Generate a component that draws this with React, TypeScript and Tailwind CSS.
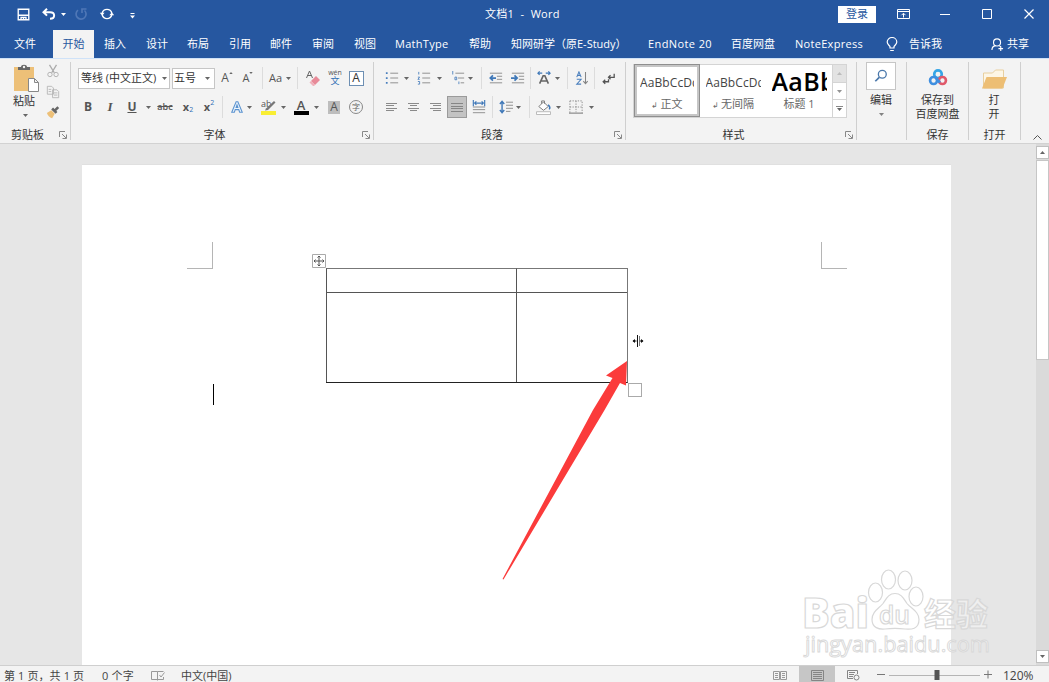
import type { ReactNode } from "react";
import { twMerge } from "tailwind-merge";

const TABS = [
  { label: "插入", width: "w-[42px]" },
  { label: "设计", width: "w-[41px]" },
  { label: "布局", width: "w-[42px]" },
  { label: "引用", width: "w-[41px]" },
  { label: "邮件", width: "w-[42px]" },
  { label: "审阅", width: "w-[42px]" },
  { label: "视图", width: "w-[41px]" },
  { label: "MathType", width: "w-[74px] tracking-[0.3px]" },
  { label: "帮助", width: "w-[42px]" },
  { label: "知网研学（原E-Study）", width: "w-[137px]" },
  { label: "EndNote 20", width: "w-[83px] tracking-[0.4px]" },
  { label: "百度网盘", width: "w-[64px]" },
  { label: "NoteExpress", width: "w-[91px] tracking-[0.3px]" },
];

function Caret({ className }: { className?: string }) {
  return (
    <svg viewBox="0 0 5 3" className={twMerge("h-[3px] w-[5px] shrink-0", className)}>
      <path d="M0 0h5L2.5 3z" fill="#666" />
    </svg>
  );
}

function Cell({ className, children }: { className?: string; children?: ReactNode }) {
  return (
    <div className={twMerge("flex h-[22px] shrink-0 items-center justify-center", className)}>
      {children}
    </div>
  );
}

function Sep({ className }: { className?: string }) {
  return <div className={twMerge("h-[22px] w-px shrink-0 bg-[#dcdcdc]", className)} />;
}

function Icon({ children, className }: { children: ReactNode; className?: string }) {
  return (
    <svg
      viewBox="0 0 16 16"
      fill="none"
      className={twMerge("size-[14px] shrink-0 stroke-[#858585]", className)}
    >
      {children}
    </svg>
  );
}

function Launcher() {
  return (
    <svg viewBox="0 0 8 8" fill="none" stroke="#888" className="size-2 shrink-0">
      <path d="M.5 6V.5H6M3 3l4 4M7.5 3.5v4h-4" />
    </svg>
  );
}

function Group({
  className,
  label,
  launcher,
  children,
}: {
  className: string;
  label?: string;
  launcher?: boolean;
  children: ReactNode;
}) {
  return (
    <section className={twMerge("flex shrink-0 flex-col", className)}>
      <div className="h-[67px]">{children}</div>
      <div className="flex h-[17px] items-center pr-[3px] pt-px">
        <span className={launcher ? "flex-1 pr-1 text-center" : "flex-1 pl-[3px] text-center"}>
          {label}
        </span>
        {launcher && <Launcher />}
      </div>
    </section>
  );
}

function GroupLine() {
  return <div className="mt-[3px] h-[78px] w-px shrink-0 bg-[#cfcfcf]" />;
}

function TitleBar() {
  return (
    <div className="flex h-[30px] items-center pb-[2px] text-white">
      <div className="flex w-[485px] items-center">
        <Icon className="ml-[17px] size-[13px] stroke-white">
          <path d="M1.500 1.500h13v13h-13zM1.500 9h13M5 14.500v-3h6v3M8 12v2" strokeWidth="1.700" />
        </Icon>
        <svg viewBox="0 0 14 12" fill="none" stroke="#fff" strokeWidth="2" className="ml-[12px] h-3 w-[14px]">
          <path d="M5 .8 1.500 4.200 5 7.600M1.500 4.200h6.500c5.500 0 5.500 6.500 0 6.500" />
        </svg>
        <svg viewBox="0 0 5 3" className="ml-[5px] h-[3px] w-[5px]">
          <path d="M0 0h5L2.500 3z" fill="#fff" />
        </svg>
        <svg viewBox="0 0 14 14" fill="none" stroke="#4f77b6" strokeWidth="1.700" className="ml-[8px] size-[14px]">
          <path d="M4 3.200A5 5 0 1 0 10.500 3.500M8 6V2h4.500" />
        </svg>
        <svg viewBox="0 0 16 14" fill="none" stroke="#fff" strokeWidth="1.400" className="ml-[11px] h-[14px] w-4">
          <path d="M3.200 6a5 5 0 0 1 9.600 0M12.800 8a5 5 0 0 1-9.600 0" />
          <path d="M.8 5.800h4.800L3.200 8.800zM10.400 8.200h4.800l-2.400-3z" fill="#fff" stroke="none" />
        </svg>
        <svg viewBox="0 0 5 6" className="ml-[15px] mt-[3px] h-[6px] w-[5px]">
          <path d="M.5 0h4v1h-4zM0 2.500h5L2.500 5.500z" fill="#fff" />
        </svg>
      </div>
      <span className="w-[353px] whitespace-pre text-[11px] tracking-[0.3px]">文档1  -  Word</span>
      <div className="flex h-[17px] w-[38px] items-center justify-center bg-white text-[11px] text-[#2757a0]">
        登录
      </div>
      <svg viewBox="0 0 13 10" fill="none" stroke="#fff" className="ml-[21px] h-[10px] w-[13px]">
        <path d="M.5.5h12v9H.5zM.5 2.500h12M6.500 8.500v-4M4.500 6.200l2-2 2 2" />
      </svg>
      <svg viewBox="0 0 10 10" stroke="#fff" className="ml-[30px] size-[10px]">
        <path d="M0 5.500h10" />
      </svg>
      <svg viewBox="0 0 10 10" fill="none" stroke="#fff" className="ml-[32px] size-[10px]">
        <path d="M.5.5h9v9h-9z" />
      </svg>
      <svg viewBox="0 0 10 10" stroke="#fff" strokeWidth="1.200" className="ml-[32px] size-[10px]">
        <path d="m.5.5 9 9m0-9-9 9" />
      </svg>
    </div>
  );
}

function TabBar() {
  return (
    <nav className="flex h-7 items-center whitespace-nowrap text-[11px] text-white">
      <span className="w-[53px] pl-[14px]">文件</span>
      <span className="mr-[10px] flex h-7 w-[41px] items-center justify-center bg-[#f3f3f3] text-[#2757a0]">
        开始
      </span>
      {TABS.map((tab) => (
        <span key={tab.label} className={twMerge("shrink-0", tab.width)}>
          {tab.label}
        </span>
      ))}
      <svg viewBox="0 0 12 15" fill="none" stroke="#fff" strokeWidth="1.200" className="h-[15px] w-3">
        <path d="M4 11V9.500C3 8 1.200 7.200 1.200 5a4.800 4.500 0 0 1 9.600 0c0 2.200-1.800 3-2.800 4.500V11zM4.200 13.500h3.600" />
      </svg>
      <span className="ml-[11px] w-[82px]">告诉我</span>
      <svg viewBox="0 0 14 14" fill="none" stroke="#fff" strokeWidth="1.200" className="size-[13px]">
        <circle cx="6.500" cy="4.800" r="3.800" />
        <path d="M1 13c0-3 2-4.500 4-4.800M9 8.500l1.500 1M10.500 9v5M8 11.500h5" />
      </svg>
      <span className="ml-[3px]">共享</span>
    </nav>
  );
}

function Clipboard() {
  return (
    <Group className="w-[70px]" label="剪贴板" launcher>
      <div className="flex pl-[12px] pt-[5px]">
        <div className="flex w-[28px] flex-col items-start">
          <svg viewBox="0 0 28 28" className="h-7 w-7">
            <path d="M2 3h20v24H2z" fill="#edc078" />
            <path d="M6 6V3h3c0-3 6-3 6 0h3v3z" fill="#666" />
            <circle cx="12" cy="3" r="1.200" fill="#f3f3f3" />
            <path d="M16.500 14.500h6l4 4v9h-10zM22.500 14.500v4h4" fill="#fff" stroke="#888" />
          </svg>
          <span className="mt-[1px] w-6 text-center text-[11px] leading-[15px]">粘贴</span>
          <Caret className="ml-[11px] mt-[6px]" />
        </div>
        <div className="ml-[5px] flex w-4 flex-col items-center">
          <Icon className="stroke-[#ababab]">
            <path d="m4 1 5.500 9M12 1 6.500 10" strokeWidth="1.500" />
            <circle cx="4.500" cy="12" r="2.500" />
            <circle cx="11.500" cy="12" r="2.500" />
          </Icon>
          <Icon className="mt-[7px] stroke-[#b3b3b3]">
            <path d="M1.500 1.500h5l2 2v7h-7zM7.500 5.500h5l2 2v7h-7zM3 5h3M3 7.500h3M9 9h4M9 11.500h4" />
          </Icon>
          <Icon className="mt-[6px]">
            <path d="m1 9 5-3 4 4-3 5c-3-1-5-3-6-6z" fill="#edc078" stroke="none" />
            <path d="m7 4 5 5M10 6.500l4-4" strokeWidth="3" stroke="#666" />
          </Icon>
        </div>
      </div>
    </Group>
  );
}

function FontGroup() {
  return (
    <Group className="w-[302px]" label="字体" launcher>
      <div className="flex h-[28px] items-center pl-[7px] pt-[10px]">
        <div className="mt-[1px] flex h-[21px] w-[92px] shrink-0 items-center justify-between border border-[#c6c6c6] bg-white px-[2px] text-[11px]">
          <span className="whitespace-nowrap">等线 (中文正文)</span>
          <Caret />
        </div>
        <div className="ml-[2px] mt-[1px] flex h-[21px] w-[43px] shrink-0 items-center justify-between border border-[#c6c6c6] bg-white pl-[1px] pr-1 text-[11px]">
          <span>五号</span>
          <Caret />
        </div>
        <Cell className="ml-[2px] w-5 text-[12px] text-[#555]">
          A<Caret className="-mt-[10px] h-[2px] w-1 rotate-180" />
        </Cell>
        <Cell className="ml-px w-5 text-[11px] text-[#555]">
          A<Caret className="-mt-[10px] h-[2px] w-1" />
        </Cell>
        <Sep className="ml-[4px]" />
        <Cell className="w-[34px] gap-1 text-[11px] text-[#555]">
          Aa <Caret />
        </Cell>
        <Sep />
        <Cell className="ml-1 w-[22px]">
          <Icon className="size-4">
            <path d="M1.500 8 4.500 1l3 7M2.500 5.500h4" stroke="#666" />
            <path d="m6 11 5-5 4 4-5 5z" fill="#e88a98" stroke="none" />
            <path d="m4.500 12.500 1.500-1.500 4 4-1 1H8z" fill="#f0b0ba" stroke="none" />
          </Icon>
        </Cell>
        <Cell className="w-[22px] flex-col text-[#555]">
          <span className="text-[7px] leading-[6px]">wén</span>
          <span className="text-[9px] leading-[10px] text-[#2f6fb5]">文</span>
        </Cell>
        <Cell className="w-[20px]">
          <span className="flex size-[15px] items-center justify-center border border-[#6d8fb3] bg-white text-[12px] leading-none text-[#333]">
            A
          </span>
        </Cell>
      </div>
      <div className="flex h-[29px] items-center pl-[6px] pt-[11px] text-[12px] text-[#555]">
        <Cell className="w-[22px] font-bold">B</Cell>
        <Cell className="w-[22px] font-['Liberation_Serif'] text-[13px] font-bold italic">I</Cell>
        <Cell className="w-[22px] font-bold underline">U</Cell>
        <Cell className="w-[10px]">
          <Caret />
        </Cell>
        <Cell className="w-6 text-[9px] font-semibold line-through">abc</Cell>
        <Cell className="w-[22px] text-[11px] font-bold">
          x<span className="mt-[7px] text-[7px] font-normal text-[#2f6fb5]">2</span>
        </Cell>
        <Cell className="w-5 text-[11px] font-bold">
          x<span className="-mt-[7px] text-[7px] font-normal text-[#2f6fb5]">2</span>
        </Cell>
        <Sep className="ml-[3px]" />
        <Cell className="ml-1 w-5">
          <Icon>
            <path d="M2 14 7 2h2l5 12h-3l-1-3H6l-1 3zM7 8.500h2L8 5.500z" stroke="#5b93cf" strokeWidth="1.200" fill="#eaf3fc" />
          </Icon>
        </Cell>
        <Caret />
        <Cell className="ml-[5px] w-6">
          <svg viewBox="0 0 16 15" className="h-[15px] w-4">
            <text x="0" y="7" fontSize="9" fill="#555">ab</text>
            <path d="M5 8.500 13 1l1.500 1.500L7 10l-3 .5z" fill="#777" />
            <path d="M0 11h15v4H0z" fill="#f9ee33" />
          </svg>
        </Cell>
        <Caret />
        <Cell className="ml-1 w-[22px] flex-col">
          <span className="text-[13px] font-semibold leading-[11px]">A</span>
          <span className="h-[4px] w-[15px] bg-black" />
        </Cell>
        <Caret className="ml-[2px]" />
        <Cell className="ml-1 w-[22px]">
          <span className="flex h-[13px] w-[12px] items-center justify-center bg-[#bdbdbd] leading-none">A</span>
        </Cell>
        <Cell className="w-[22px]">
          <span className="flex size-[14px] items-center justify-center rounded-full border border-[#888] text-[8px] leading-none text-[#666]">
            字
          </span>
        </Cell>
      </div>
    </Group>
  );
}

function ParagraphGroup() {
  return (
    <Group className="w-[251px]" label="段落" launcher>
      <div className="flex h-[28px] items-center pl-[6px] pt-[10px]">
        <Cell className="w-[24px]">
          <Icon>
            <path d="M6 2.500h9M6 8h9M6 13.500h9" />
            <path d="M1 2.500h2M1 8h2M1 13.500h2" stroke="#4a7fbd" strokeWidth="2" />
          </Icon>
        </Cell>
        <Caret />
        <Cell className="ml-[4px] w-[22px]">
          <Icon>
            <path d="M6 2.500h9M6 8h9M6 13.500h9" />
            <path d="M2 1v3M1 7h2l-2 2.500h2M1 12h2v3H1" stroke="#4a7fbd" />
          </Icon>
        </Cell>
        <Caret className="ml-[2px]" />
        <Cell className="ml-[6px] w-[20px]">
          <Icon>
            <path d="M5 2.500h10M8 8h7M11 13.500h4" />
            <path d="M2 0v4M4.500 7h2v3h-2zM9 12v3" stroke="#4a7fbd" />
          </Icon>
        </Cell>
        <Caret />
        <Sep className="ml-[8px]" />
        <Cell className="ml-[3px] w-[22px]">
          <Icon>
            <path d="M1 2.500h14M9 6h6M9 9.500h6M1 13.500h14" />
            <path d="M1.500 8H8M4.500 5 1.500 8l3 3" stroke="#3f78b8" strokeWidth="2" />
          </Icon>
        </Cell>
        <Cell className="w-[21px]">
          <Icon>
            <path d="M1 2.500h14M9 6h6M9 9.500h6M1 13.500h14" />
            <path d="M0 8h6.500M4 5l3 3-3 3" stroke="#3f78b8" strokeWidth="2" />
          </Icon>
        </Cell>
        <Sep className="ml-[2px]" />
        <Cell className="ml-[2px] w-[22px]">
          <Icon>
            <path d="m3 14.500 4-9h2l4 9M5 11.500h6" stroke="#666" strokeWidth="1.800" />
            <path d="M1 2.500h5M3 .5l-2 2 2 2M15 2.500h-5M13 .5l2 2-2 2" stroke="#3f78b8" strokeWidth="1.300" />
          </Icon>
        </Cell>
        <Caret />
        <Sep className="ml-[7px]" />
        <Cell className="ml-[3px] w-[21px]">
          <Icon>
            <path d="m2 7 2.500-6L7 7M3 5h3M2 9.500h5L2 15h5" stroke="#4a7fbd" strokeWidth="1.200" />
            <path d="M12 1v13M9.500 11.500l2.500 3 2.500-3" strokeWidth="1.200" />
          </Icon>
        </Cell>
        <Sep className="ml-[2px]" />
        <Cell className="ml-[2px] w-[22px]">
          <Icon className="size-[13px]">
            <path d="M15 2v4.500H8.500M10.500 4 8 6.500 10.500 9M8 9v3H1M4 9.500 1.500 12 4 14.500" stroke="#555" strokeWidth="1.600" />
          </Icon>
        </Cell>
      </div>
      <div className="flex h-[29px] items-center pl-[6px] pt-[11px]">
        <Cell className="w-[22px]">
          <svg viewBox="0 0 11 8" stroke="#8a8a8a" className="h-2 w-[11px]">
            <path d="M0 .5h11M0 2.500h8M0 5.500h11M0 7.500h8" />
          </svg>
        </Cell>
        <Cell className="w-[22px]">
          <svg viewBox="0 0 11 8" stroke="#8a8a8a" className="h-2 w-[11px]">
            <path d="M0 .5h11M2 2.500h7M0 5.500h11M2 7.500h7" />
          </svg>
        </Cell>
        <Cell className="w-[22px]">
          <svg viewBox="0 0 11 8" stroke="#8a8a8a" className="h-2 w-[11px]">
            <path d="M0 .5h11M3 2.500h8M0 5.500h11M3 7.500h8" />
          </svg>
        </Cell>
        <Cell className="ml-px w-[20px] border border-[#9a9a9a] bg-[#c3c3c3]">
          <svg viewBox="0 0 12 9" stroke="#858585" className="h-[9px] w-3">
            <path d="M0 .5h12M0 3.500h12M0 5.500h12M0 8.500h12" />
          </svg>
        </Cell>
        <Cell className="ml-px w-[22px]">
          <Icon>
            <path d="M1 8h14M1 11h14M1 14.500h14" />
            <path d="M1.500 0v7M14.500 0v7M3 3.500h10M5 1.500l-2 2 2 2M11 1.500l2 2-2 2" stroke="#3f78b8" strokeWidth="1.300" />
          </Icon>
        </Cell>
        <Sep className="ml-[2px]" />
        <Cell className="ml-[2px] w-[21px]">
          <Icon>
            <path d="M8 2.500h8M8 6h8M8 9.500h8M8 13h5" />
            <path d="M3.500 1v14M1 4.500l2.500-3 2.500 3M1 11.500l2.500 3 2.500-3" stroke="#3f78b8" strokeWidth="1.600" />
          </Icon>
        </Cell>
        <Caret />
        <Sep className="ml-[8px]" />
        <Cell className="ml-[2px] w-[22px]">
          <Icon className="size-[15px]">
            <path d="m3 7 5-5 5 5-5 4zM6 4V1h3v3" stroke="#777" fill="#fff" />
            <path d="M13 5c2 2 2 4 1 5" stroke="#3f78b8" strokeWidth="1.500" />
            <path d="M.5 12.500h15v3H.5z" stroke="#b5b5b5" fill="#fff" />
          </Icon>
        </Cell>
        <Caret className="ml-[2px]" />
        <Cell className="ml-[4px] w-[22px]">
          <Icon>
            <path d="M1 1h14v13.500M1 1v13.500M8 1v13M1 8h14" strokeDasharray="1.500 1.500" />
            <path d="M0 15h16" strokeWidth="1.300" />
          </Icon>
        </Cell>
        <Caret className="ml-[2px]" />
      </div>
    </Group>
  );
}

function StyleGroup() {
  return (
    <Group className="w-[230px]" label="样式" launcher>
      <div className="pl-[7px] pt-[5px]">
        <div className="flex h-[54px] w-[214px] border border-[#d4d4d4] bg-white text-[#666]">
          <div className="-mt-px flex h-[53px] w-[66px] shrink-0 flex-col border border-[#8f8f8f] bg-[#c6c6c6] p-[2px]">
            <div className="flex h-full w-full flex-col items-center bg-white pt-[7px]">
              <span className="w-[54px] overflow-hidden whitespace-nowrap text-[12px] leading-[18px] tracking-[0.1px] text-[#444]">AaBbCcDd</span>
              <span className="mt-[4px] text-[11px] leading-[15px]">
                <span className="text-[8px]">↲ </span>正文
              </span>
            </div>
          </div>
          <div className="flex w-[66px] shrink-0 flex-col items-center pt-[9px]">
            <span className="w-[55px] overflow-hidden whitespace-nowrap text-[12px] leading-[18px] tracking-[0.1px] text-[#444]">AaBbCcDd</span>
            <span className="mt-[4px] text-[11px] leading-[15px]">
              <span className="text-[8px]">↲ </span>无间隔
            </span>
          </div>
          <div className="flex w-[66px] shrink-0 flex-col items-center pt-[2px]">
            <span className="w-[55px] overflow-hidden whitespace-nowrap text-[25px] font-semibold leading-[29px] tracking-[0.3px] text-black">AaBb</span>
            <span className="text-[11px] leading-[15px]">标题 1</span>
          </div>
          <div className="flex w-[14px] shrink-0 flex-col border-l border-[#d4d4d4]">
            <div className="flex flex-1 items-center justify-center bg-[#e3e3e3]">
              <Caret className="rotate-180 opacity-30" />
            </div>
            <div className="flex flex-1 items-center justify-center border-y border-[#d4d4d4]">
              <Caret className="opacity-70" />
            </div>
            <div className="flex flex-1 flex-col items-center justify-center gap-px">
              <span className="h-px w-[7px] bg-[#888]" />
              <Caret />
            </div>
          </div>
        </div>
      </div>
    </Group>
  );
}

function Ribbon() {
  return (
    <div className="flex h-[85px] border-b border-[#d2d2d2] bg-[#f3f3f3] text-[11px] text-[#333]">
      <Clipboard />
      <GroupLine />
      <FontGroup />
      <GroupLine />
      <ParagraphGroup />
      <GroupLine />
      <StyleGroup />
      <GroupLine />
      <Group className="w-[49px]">
        <div className="flex flex-col items-center pr-px pt-[3px]">
          <div className="flex h-[28px] w-[30px] items-center justify-center border border-[#c6c6c6] bg-white">
            <Icon>
              <circle cx="9.500" cy="6" r="4.500" stroke="#4a78ab" strokeWidth="1.500" />
              <path d="m6 9.500-4.500 4.500" stroke="#4a78ab" strokeWidth="2" />
            </Icon>
          </div>
          <span className="mt-[2px] leading-[15px]">编辑</span>
          <Caret className="mt-[6px] opacity-80" />
        </div>
      </Group>
      <GroupLine />
      <Group className="w-[61px]" label="保存">
        <div className="flex flex-col items-center pt-[10px] leading-[14px]">
          <svg viewBox="0 0 20 18" fill="none" strokeWidth="2.800" className="mb-[7px] h-[17px] w-5">
            <circle cx="10" cy="5.500" r="4" stroke="#36a5e6" />
            <circle cx="14.700" cy="12.200" r="3.700" stroke="#e0596a" />
            <circle cx="5.300" cy="12.200" r="3.700" stroke="#3f8fe0" />
            <path d="M7.500 9 12 14.500" stroke="#3f8fe0" />
          </svg>
          <span>保存到</span>
          <span>百度网盘</span>
        </div>
      </Group>
      <GroupLine />
      <Group className="w-[51px]" label="打开">
        <div className="flex flex-col items-center pr-px pt-[10px] leading-[14px]">
          <svg viewBox="0 0 26 20" className="mb-[4px] h-5 w-[26px]">
            <path d="M2.500 19V4h9l3-3h8v18z" fill="#fdf6e6" stroke="#e8cf9f" />
            <path d="M1 19.500 5.500 8H26l-4.500 11.500z" fill="#edbe74" />
          </svg>
          <span>打</span>
          <span>开</span>
        </div>
      </Group>
      <GroupLine />
      <svg viewBox="0 0 9 5" fill="none" stroke="#555" className="ml-[12px] mt-[76px] h-[5px] w-[9px]">
        <path d="m.5 4.500 4-4 4 4" />
      </svg>
    </div>
  );
}

function Watermark() {
  return (
    <svg
      viewBox="800 565 200 98"
      className="absolute left-[800px] top-[421px] h-[98px] w-[200px] font-['Open_Sans','Noto_Sans_CJK_SC',sans-serif]"
      fill="#fff"
      fillOpacity="0.4"
      stroke="#d8d8d8"
      strokeWidth="1.200"
    >
      <text x="802" y="628" fontSize="43" fontWeight="800" textLength="67" lengthAdjust="spacingAndGlyphs">Bai</text>
      <ellipse cx="875.500" cy="592.500" rx="7" ry="9.500" />
      <ellipse cx="888.500" cy="579.500" rx="7" ry="9.500" />
      <ellipse cx="905" cy="580.500" rx="7" ry="9.500" />
      <ellipse cx="916" cy="596.500" rx="7" ry="9.500" />
      <path d="M895 593.500c7 0 9 6 12 10 4 5 12 8 12 16 0 10-8 10-14 9.500-7-1-13-1-20 0-6 .5-13-1-13-9.500 0-8 7-11 11-16 3-4 5-10 12-10z" />
      <text x="879" y="624" fontSize="26" fontWeight="600" textLength="31" lengthAdjust="spacingAndGlyphs">du</text>
      <text x="924" y="626" fontSize="32" fontWeight="700">经验</text>
      <text x="805" y="652" fontSize="21" fontWeight="500" strokeWidth="0.900" textLength="185" lengthAdjust="spacingAndGlyphs">jingyan.baidu.com</text>
    </svg>
  );
}

function Workspace() {
  return (
    <main className="relative flex h-[521px] overflow-hidden bg-[#e6e6e6]">
      <div className="ml-[82px] mt-5 w-[869px] shrink-0 border-t border-[#e0e0e0] bg-white pl-[244px] pt-[103px]">
        <div className="grid h-[115px] w-[302px] grid-cols-[190px_1fr] grid-rows-[24px_1fr] border-b border-r border-b-[#222] border-r-[#777]">
          <div className="border-l border-t border-l-[#555] border-t-[#777]" />
          <div className="border-l border-t border-l-[#555] border-t-[#777]" />
          <div className="border-l border-t border-[#555]" />
          <div className="border-l border-t border-[#555]" />
        </div>
      </div>
      <div className="absolute left-[187px] top-[98px] h-[27px] w-[26px] border-b border-r border-[#b5b5b5]" />
      <div className="absolute left-[821px] top-[98px] h-[27px] w-[26px] border-b border-l border-[#b5b5b5]" />
      <div className="absolute left-[213px] top-[240px] h-[21px] w-px bg-black" />
      <svg viewBox="0 0 14 14" fill="none" stroke="#555" className="absolute left-[312px] top-[110px] size-[14px]">
        <path d="M.5.5h13v13H.5z" stroke="#aaa" fill="#fff" />
        <path d="M7 2v10M2 7h10M5.500 3.500 7 2l1.500 1.500M5.500 10.500 7 12l1.500-1.500M3.500 5.500 2 7l1.500 1.500M10.500 5.500 12 7l-1.500 1.500" />
      </svg>
      <div className="absolute left-[628px] top-[239px] size-[14px] border border-[#aaa] bg-white" />
      <svg viewBox="0 0 12 12" stroke="#111" className="absolute left-[632px] top-[191px] size-3">
        <path d="M5.500 0v12" />
        <path d="M7.500 1v10" stroke="#777" />
        <path d="M1 6h3.500M8 6h3" />
        <path d="M.500 6l2.500-2v4zM11.500 6 9 4v4z" fill="#111" stroke="none" />
      </svg>
      <svg viewBox="500 360 130 222" className="absolute left-[500px] top-[216px] h-[222px] w-[130px]">
        <path d="M627 361 606 375.500 612.500 378 593 410 502.500 579 503.500 579.500 604 411 620 383 626 385.500z" fill="#fb3b3b" />
      </svg>
      <div className="ml-auto flex w-[13px] flex-col bg-[#dadada] py-[2px]">
        <div className="flex h-[13px] shrink-0 items-center justify-center border border-[#c0c0c0] bg-white">
          <Caret className="w-[7px] rotate-180" />
        </div>
        <div className="mt-px h-[200px] shrink-0 border border-[#c6c6c6] bg-white" />
        <div className="mt-auto flex h-[13px] shrink-0 items-center justify-center border border-[#c0c0c0] bg-white">
          <Caret className="w-[7px]" />
        </div>
      </div>
      <Watermark />
    </main>
  );
}

function StatusBar() {
  return (
    <footer className="flex h-[17px] items-center whitespace-nowrap border-t border-[#cfcfcf] bg-[#f3f3f3] pt-[2px] text-[11px] leading-[15px] text-[#444]">
      <span className="w-[98px] pl-1 tracking-[0.1px]">第 1 页，共 1 页</span>
      <span className="w-[53px] pl-1 tracking-[0.2px]">0 个字</span>
      <svg viewBox="0 0 14 11" fill="none" stroke="#999" className="h-[11px] w-[14px]">
        <path d="M6.500 1.500v9M6.500 1.500h-6v8h6M6.500 1.500h6M6.500 9.500h6M12.500 7v2.500M8.500 5l1.500 2 3.500-4.500" />
      </svg>
      <span className="ml-[16px] w-[592px]">中文(中国)</span>
      <svg viewBox="0 0 14 11" fill="none" stroke="#999" className="h-[11px] w-[14px]">
        <path d="M.5 1.500h6v8h-6zM7.500 1.500h6v8h-6zM2 3.500h3M2 5.500h3M2 7.500h3M9 3.500h3M9 5.500h3M9 7.500h3" />
      </svg>
      <div className="-mt-[2px] ml-[12px] flex h-4 w-[36px] items-center justify-center bg-[#c6c6c6]">
        <svg viewBox="0 0 13 11" fill="none" stroke="#858585" className="mt-[2px] h-[11px] w-[13px]">
          <path d="M.5.500h12v10H.500zM2 2.500h9M2 4.500h9M2 6.500h9M2 8.500h9" />
        </svg>
      </div>
      <svg viewBox="0 0 13 12" fill="none" stroke="#858585" className="ml-[12px] h-3 w-[13px]">
        <path d="M6 9.500H.5v-8h10V5M2 3.500h6M2 5.500h5M2 7.500h4" />
        <circle cx="9.500" cy="8.500" r="2.500" />
      </svg>
      <svg viewBox="0 0 116 12" stroke="#777" className="ml-[17px] h-3 w-[116px]">
        <path d="M0 5.500h8M107 5.500h8M111 1.500v8" />
        <path d="M12 6.500h91" stroke="#b5b5b5" />
        <path d="M57.500 1h5v10h-5z" fill="#555" stroke="none" />
      </svg>
      <span className="ml-[10px] text-[12px]">120%</span>
    </footer>
  );
}

export default function App() {
  return (
    <div className="flex h-[682px] w-[1049px] flex-col overflow-hidden bg-[#e6e6e6] font-['Open_Sans','Noto_Sans_CJK_SC',sans-serif]">
      <header className="h-[59px] border-b border-[#cfe2f8] bg-[#2657a0]">
        <TitleBar />
        <TabBar />
      </header>
      <Ribbon />
      <Workspace />
      <StatusBar />
    </div>
  );
}
